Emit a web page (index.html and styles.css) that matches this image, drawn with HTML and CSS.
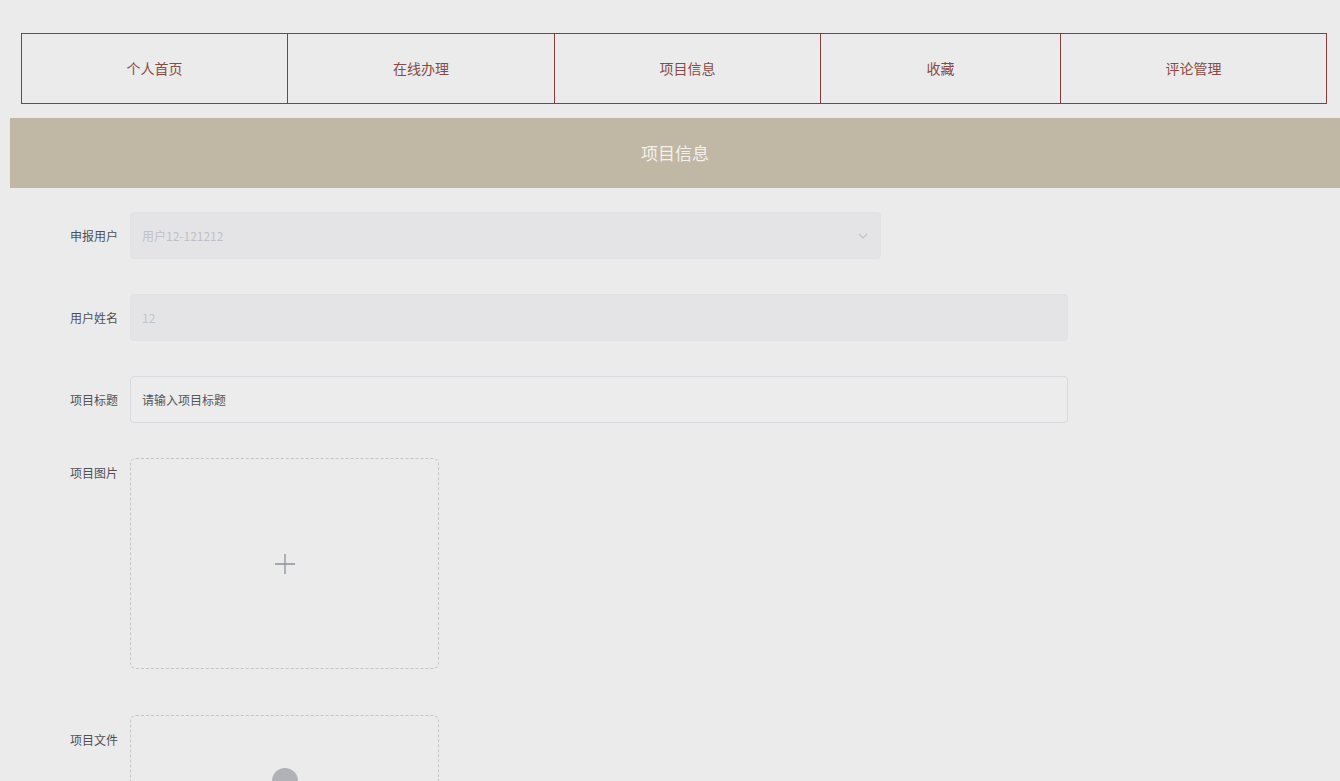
FILE: index.html
```html
<!DOCTYPE html>
<html lang="zh-CN">
<head>
    <meta charset="UTF-8">
    <meta name="viewport" content="width=device-width, initial-scale=1.0">
    <title>项目信息</title>
    <link rel="stylesheet" href="styles.css">
</head>
<body>
    <header>
        <ul class="menu">
            <li class="w266"><a href="#">个人首页</a></li>
            <li class="w267"><a href="#">在线办理</a></li>
            <li class="w266"><a href="#">项目信息</a></li>
            <li class="w241"><a href="#">收藏</a></li>
            <li class="w266"><a href="#">评论管理</a></li>
        </ul>
    </header>
    <div class="title-bar">项目信息</div>
    <form class="project-form">
        <div class="form-item">
            <label>申报用户</label>
            <div class="select disabled">
                <span class="value">用户12-121212</span>
                <svg class="arrow" width="12" height="12" viewBox="0 0 12 12"><path d="M2 4 L6 8 L10 4" fill="none" stroke="#c0c4cc" stroke-width="1.2"/></svg>
            </div>
        </div>
        <div class="form-item">
            <label>用户姓名</label>
            <input class="field disabled" type="text" value="12" disabled>
        </div>
        <div class="form-item">
            <label>项目标题</label>
            <input class="field" type="text" placeholder="请输入项目标题">
        </div>
        <div class="form-item upload-item">
            <label>项目图片</label>
            <div class="upload">
                <svg width="24" height="24" viewBox="0 0 24 24"><path d="M12 2 V22 M2 12 H22" stroke="#8c939d" stroke-width="1.3"/></svg>
            </div>
        </div>
        <div class="form-item upload-item file-item">
            <label>项目文件</label>
            <div class="upload file-upload">
                <span class="dot"></span>
            </div>
        </div>
    </form>
</body>
</html>
```

FILE: styles.css
```css
body {
    margin: 0;
    background-color: #ebebeb;
    font-family: "Noto Sans CJK SC", "Noto Sans", sans-serif;
    overflow: hidden;
    height: 781px;
}
header {
    padding: 33px 13px 0 21px;
}
.menu {
    list-style-type: none;
    margin: 0;
    padding: 0;
    display: flex;
    border: 1px solid #8b3c3c;
    width: 1304px;
}
.menu li {
    border-left: 1px solid #8b3c3c;
}
.menu li:first-child {
    border-left: none;
}
.w266 { width: 266px; }
.w267 { width: 267px; }
.w241 { width: 240px; }
.menu a {
    display: block;
    height: 69px;
    line-height: 69px;
    text-align: center;
    color: #8a4a44;
    font-size: 14px;
    text-decoration: none;
}
.title-bar {
    margin: 14px 0 0 10px;
    height: 70px;
    line-height: 70px;
    background-color: #c1b7a5;
    color: #f4f1ec;
    text-align: center;
    font-size: 17px;
}
.project-form {
    padding: 24px 0 0 50px;
}
.form-item {
    display: flex;
    align-items: center;
    margin-bottom: 35px;
}
.form-item label {
    width: 68px;
    padding-right: 12px;
    text-align: right;
    font-size: 12px;
    color: #505155;
}
.upload-item {
    align-items: flex-start;
    margin-bottom: 46px;
}
.upload-item label {
    padding-top: 6px;
}
.file-item label {
    padding-top: 16px;
}
.select {
    box-sizing: border-box;
    width: 751px;
    height: 47px;
    border: 1px solid #e1e2e6;
    border-radius: 4px;
    background-color: #e4e4e7;
    display: flex;
    align-items: center;
    justify-content: space-between;
    padding: 0 11px;
}
.select .value {
    font-size: 12px;
    color: #bfc1c7;
}
.field {
    box-sizing: border-box;
    width: 938px;
    height: 47px;
    border: 1px solid #d9dadf;
    border-radius: 4px;
    background-color: #ececec;
    padding: 0 11px;
    font-family: inherit;
    font-size: 12px;
    color: #606266;
    outline: none;
}
.field::placeholder {
    color: #55575c;
}
.field.disabled {
    background-color: #e4e4e7;
    border-color: #e1e2e6;
    color: #c0c4cc;
}
.upload {
    box-sizing: border-box;
    width: 309px;
    height: 211px;
    border: 1px dashed #c3c5ca;
    border-radius: 6px;
    display: flex;
    align-items: center;
    justify-content: center;
}
.file-upload {
    align-items: flex-start;
    padding-top: 52px;
}
.dot {
    width: 26px;
    height: 26px;
    border-radius: 50%;
    background-color: #b0b2b8;
}
```
